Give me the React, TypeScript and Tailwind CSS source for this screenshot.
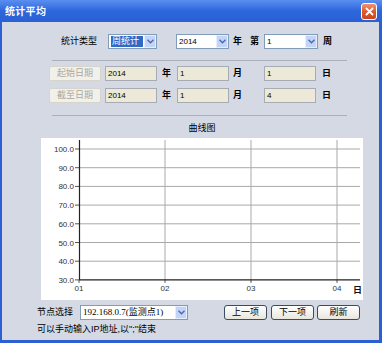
import React from "react";

// 统计平均 dialog —— XP 风格窗口：标题栏 + 查询条件 + 曲线图 + 节点选择。

const FONT = "font-['Liberation_Sans','Noto_Sans_CJK_SC',sans-serif]";

function Arrow() {
  return (
    <span className="flex h-full w-[12px] shrink-0 items-center justify-center border border-[#e6eeff] bg-[#c3d4f9]">
      <svg width="7" height="5" viewBox="0 0 7 5">
        <path d="M0.5 0.8 L3.5 3.8 L6.5 0.8" fill="none" stroke="#4d6aa8" strokeWidth="1.4" />
      </svg>
    </span>
  );
}

function Select({
  value,
  className,
  selected,
  serif,
}: {
  value: string;
  className: string;
  selected?: boolean;
  serif?: boolean;
}) {
  return (
    <div className={`flex h-[15px] shrink-0 items-center border border-[#7f9db9] bg-white ${className}`}>
      <span className="flex h-full min-w-0 flex-1 items-center pl-[2px] pr-[1px]">
        <span
          className={`leading-[11px] ${serif ? "font-['Liberation_Serif','Noto_Sans_CJK_SC',serif] text-[9px]" : "text-[8px]"} ${
            selected ? "bg-[#316ac5] pl-[1px] pr-[4px] text-[9px] text-white" : "text-black"
          }`}
        >
          {value}
        </span>
      </span>
      <Arrow />
    </div>
  );
}

function Field({ value, className }: { value: string; className: string }) {
  return (
    <div
      className={`flex h-[15px] w-[52px] shrink-0 items-center border border-[#a7acb4] bg-[#ece9d8] pl-[2px] text-[8px] text-black ${className}`}
    >
      {value}
    </div>
  );
}

function DisabledButton({ label }: { label: string }) {
  return (
    <div className="ml-[47px] flex h-[15px] w-[52px] shrink-0 items-center justify-center rounded-[2px] border border-[#d6d4cb] bg-[#f1f0ea] text-[9px] text-[#aca899]">
      {label}
    </div>
  );
}

function Button({ label, className }: { label: string; className: string }) {
  return (
    <div
      className={`flex h-[15px] w-[43px] shrink-0 items-center justify-center rounded-[3px] border border-[#3b4b63] bg-gradient-to-b from-white to-[#e8e6dd] text-[9px] text-black ${className}`}
    >
      {label}
    </div>
  );
}

function Unit({ ch, className }: { ch: string; className: string }) {
  return <span className={`w-[9px] shrink-0 text-[9px] font-semibold leading-[15px] text-black ${className}`}>{ch}</span>;
}

function Chart() {
  const ys = [100, 90, 80, 70, 60, 50, 40, 30];
  const xs = ["01", "02", "03", "04"];
  const top = 11;
  const step = 18.7;
  return (
    <svg width="322" height="162" viewBox="0 0 322 162" className="block">
      {ys.map((v, i) => {
        const y = top + i * step;
        return (
          <g key={v}>
            {i < ys.length - 1 && <line x1="38" y1={y} x2="319" y2={y} stroke="#a9a9a9" strokeWidth="1" />}
            <line x1="34" y1={y} x2="38" y2={y} stroke="#555" strokeWidth="1" />
            <text
              x="33"
              y={y + 3}
              textAnchor="end"
              fontSize="8"
              fill="#333"
              fontFamily="Liberation Sans, sans-serif"
            >
              {v.toFixed(1)}
            </text>
          </g>
        );
      })}
      {xs.map((l, i) => {
        const x = 38 + i * 86;
        return (
          <g key={l}>
            {i > 0 && <line x1={x} y1="2" x2={x} y2={top + 7 * step} stroke="#a9a9a9" strokeWidth="1" />}
            <line x1={x} y1={top + 7 * step} x2={x} y2={top + 7 * step + 3} stroke="#555" strokeWidth="1" />
            <text x={x} y="153" textAnchor="middle" fontSize="8" fill="#333" fontFamily="Liberation Sans, sans-serif">
              {l}
            </text>
          </g>
        );
      })}
      <line x1="38.5" y1="2" x2="38.5" y2={top + 7 * step} stroke="#222" strokeWidth="1.2" />
      <line x1="38" y1={top + 7 * step} x2="319" y2={top + 7 * step} stroke="#222" strokeWidth="1.2" />
      <text x="312" y="155" fontSize="9" fontWeight="bold" fill="#111" fontFamily="Noto Sans CJK SC, sans-serif">
        日
      </text>
    </svg>
  );
}

export default function App() {
  return (
    <div className={`flex h-[343px] w-[382px] flex-col bg-[#2c5fd2] ${FONT}`}>
      {/* 标题栏 */}
      <div className="flex h-[22px] shrink-0 items-center bg-gradient-to-b from-[#5a8ff0] via-[#2d66dc] to-[#2a60d4] pl-[5px] pr-[5px]">
        <span className="flex-1 text-[10px] font-bold tracking-[0.3px] text-white">统计平均</span>
        <div className="flex h-[17px] w-[16px] items-center justify-center rounded-[3px] border border-white bg-gradient-to-b from-[#ec9274] via-[#de5a31] to-[#c8461f]">
          <svg width="9" height="9" viewBox="0 0 9 9">
            <path d="M1.5 1.5 L7.5 7.5 M7.5 1.5 L1.5 7.5" stroke="white" strokeWidth="1.8" strokeLinecap="round" />
          </svg>
        </div>
      </div>

      {/* 主体 */}
      <div className="mb-[3px] ml-[2px] mr-[3px] flex flex-1 flex-col bg-[#d4d9e4]">
        {/* 统计类型 */}
        <div className="mt-[12px] flex h-[15px] items-center">
          <span className="ml-[59px] w-[36px] shrink-0 text-[9px] text-black">统计类型</span>
          <Select value="周统计" className="ml-[11px] w-[49px]" selected />
          <Select value="2014" className="ml-[19px] w-[53px]" />
          <Unit ch="年" className="ml-[4px]" />
          <Unit ch="第" className="ml-[8px]" />
          <Select value="1" className="ml-[5px] w-[54px]" />
          <Unit ch="周" className="ml-[5px]" />
        </div>

        <div className="ml-[50px] mt-[11px] h-px w-[295px] bg-[#a9afbb]" />

        {/* 起始日期 */}
        <div className="mt-[5px] flex h-[15px] items-center">
          <DisabledButton label="起始日期" />
          <Field value="2014" className="ml-[4px]" />
          <Unit ch="年" className="ml-[5px]" />
          <Field value="1" className="ml-[6px]" />
          <Unit ch="月" className="ml-[4px]" />
          <Field value="1" className="ml-[22px]" />
          <Unit ch="日" className="ml-[6px]" />
        </div>

        {/* 截至日期 */}
        <div className="mt-[7px] flex h-[15px] items-center">
          <DisabledButton label="截至日期" />
          <Field value="2014" className="ml-[4px]" />
          <Unit ch="年" className="ml-[5px]" />
          <Field value="1" className="ml-[6px]" />
          <Unit ch="月" className="ml-[4px]" />
          <Field value="4" className="ml-[22px]" />
          <Unit ch="日" className="ml-[6px]" />
        </div>

        <div className="ml-[50px] mt-[12px] h-px w-[295px] bg-[#a9afbb]" />

        {/* 曲线图 */}
        <div className="ml-[39px] w-[322px]">
          <div className="mt-[6px] h-[12px] text-center text-[9px] leading-[12px] text-black">曲线图</div>
          <div className="mt-[4px] h-[162px] bg-white">
            <Chart />
          </div>
        </div>

        {/* 节点选择 */}
        <div className="mt-[5px] flex h-[15px] items-center">
          <span className="ml-[35px] w-[36px] shrink-0 text-[9px] text-black">节点选择</span>
          <Select value="192.168.0.7(监测点1)" className="ml-[7px] w-[108px]" serif />
          <Button label="上一项" className="ml-[36px]" />
          <Button label="下一项" className="ml-[4px]" />
          <Button label="刷新" className="ml-[3px]" />
        </div>
        <div className="ml-[35px] mt-[3px] text-[9px] leading-[12px] text-black">可以手动输入IP地址,以";"结束</div>
      </div>
    </div>
  );
}
